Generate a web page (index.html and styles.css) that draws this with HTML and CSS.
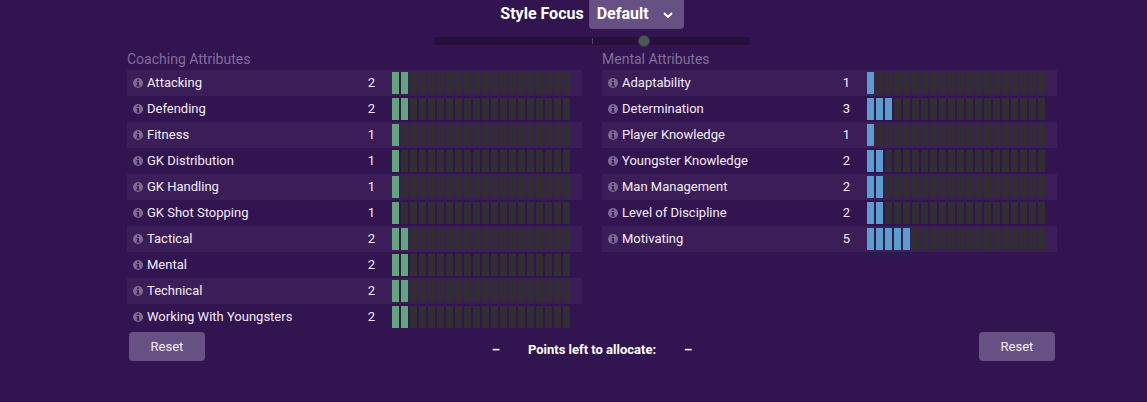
FILE: index.html
```html
<!DOCTYPE html>
<html lang="en">

<head>
    <meta charset="UTF-8">
    <meta name="viewport" content="width=device-width, initial-scale=1.0">
    <title>Coaching Style</title>
    <link rel="stylesheet" href="styles.css">
</head>

<body>
    <svg class="sprite" aria-hidden="true">
        <symbol id="info" viewBox="0 0 10 10">
            <circle cx="5" cy="5" r="5" fill="#7d6a92" />
            <path d="M4 1.5h2v1.5H4zM3.5 4H6v3.5h.7v1H3.4v-1h.8V5h-.7z" fill="#35184f" />
        </symbol>
    </svg>
    <main class="panel">
        <div class="style-focus">
            <label for="focus">Style Focus</label>
            <div class="select-wrap">
                <select id="focus">
                    <option>Default</option>
                </select>
                <svg class="chevron" viewBox="0 0 10 6"><path d="M1 1l4 4 4-4" /></svg>
            </div>
        </div>
        <div class="slider">
            <input type="range" min="0" max="100" value="67" aria-label="Style balance">
        </div>

        <div class="columns">
            <table class="attributes coaching">
                <caption>Coaching Attributes</caption>
                <tbody>
                    <tr><th scope="row"><svg class="info"><use href="#info" /></svg>Attacking</th><td class="value">2</td><td class="meter"><div class="bar"><div class="fill" style="--value: 2"></div></div></td></tr>
                    <tr><th scope="row"><svg class="info"><use href="#info" /></svg>Defending</th><td class="value">2</td><td class="meter"><div class="bar"><div class="fill" style="--value: 2"></div></div></td></tr>
                    <tr><th scope="row"><svg class="info"><use href="#info" /></svg>Fitness</th><td class="value">1</td><td class="meter"><div class="bar"><div class="fill" style="--value: 1"></div></div></td></tr>
                    <tr><th scope="row"><svg class="info"><use href="#info" /></svg>GK Distribution</th><td class="value">1</td><td class="meter"><div class="bar"><div class="fill" style="--value: 1"></div></div></td></tr>
                    <tr><th scope="row"><svg class="info"><use href="#info" /></svg>GK Handling</th><td class="value">1</td><td class="meter"><div class="bar"><div class="fill" style="--value: 1"></div></div></td></tr>
                    <tr><th scope="row"><svg class="info"><use href="#info" /></svg>GK Shot Stopping</th><td class="value">1</td><td class="meter"><div class="bar"><div class="fill" style="--value: 1"></div></div></td></tr>
                    <tr><th scope="row"><svg class="info"><use href="#info" /></svg>Tactical</th><td class="value">2</td><td class="meter"><div class="bar"><div class="fill" style="--value: 2"></div></div></td></tr>
                    <tr><th scope="row"><svg class="info"><use href="#info" /></svg>Mental</th><td class="value">2</td><td class="meter"><div class="bar"><div class="fill" style="--value: 2"></div></div></td></tr>
                    <tr><th scope="row"><svg class="info"><use href="#info" /></svg>Technical</th><td class="value">2</td><td class="meter"><div class="bar"><div class="fill" style="--value: 2"></div></div></td></tr>
                    <tr><th scope="row"><svg class="info"><use href="#info" /></svg>Working With Youngsters</th><td class="value">2</td><td class="meter"><div class="bar"><div class="fill" style="--value: 2"></div></div></td></tr>
                </tbody>
            </table>

            <table class="attributes mental">
                <caption>Mental Attributes</caption>
                <tbody>
                    <tr><th scope="row"><svg class="info"><use href="#info" /></svg>Adaptability</th><td class="value">1</td><td class="meter"><div class="bar"><div class="fill" style="--value: 1"></div></div></td></tr>
                    <tr><th scope="row"><svg class="info"><use href="#info" /></svg>Determination</th><td class="value">3</td><td class="meter"><div class="bar"><div class="fill" style="--value: 3"></div></div></td></tr>
                    <tr><th scope="row"><svg class="info"><use href="#info" /></svg>Player Knowledge</th><td class="value">1</td><td class="meter"><div class="bar"><div class="fill" style="--value: 1"></div></div></td></tr>
                    <tr><th scope="row"><svg class="info"><use href="#info" /></svg>Youngster Knowledge</th><td class="value">2</td><td class="meter"><div class="bar"><div class="fill" style="--value: 2"></div></div></td></tr>
                    <tr><th scope="row"><svg class="info"><use href="#info" /></svg>Man Management</th><td class="value">2</td><td class="meter"><div class="bar"><div class="fill" style="--value: 2"></div></div></td></tr>
                    <tr><th scope="row"><svg class="info"><use href="#info" /></svg>Level of Discipline</th><td class="value">2</td><td class="meter"><div class="bar"><div class="fill" style="--value: 2"></div></div></td></tr>
                    <tr><th scope="row"><svg class="info"><use href="#info" /></svg>Motivating</th><td class="value">5</td><td class="meter"><div class="bar"><div class="fill" style="--value: 5"></div></div></td></tr>
                </tbody>
            </table>
        </div>

        <div class="actions">
            <button type="button">Reset</button>
            <div class="points">
                <span>–</span>
                <span>Points left to allocate:</span>
                <span>–</span>
            </div>
            <button type="button">Reset</button>
        </div>
    </main>
</body>

</html>
```

FILE: styles.css
```css
* {
    box-sizing: border-box;
}

body {
    margin: 0;
    min-height: 100vh;
    border-bottom: 1px solid #2a0f45;
    background: #321450;
    color: #f3ecf8;
    font-family: Roboto, "Liberation Sans", sans-serif;
    font-size: 13px;
    line-height: 20px;
}

.sprite {
    display: none;
}

.panel {
    padding: 0 90px 0 127px;
}

/* STYLE FOCUS */
.style-focus {
    display: flex;
    justify-content: center;
    gap: 5px;
    height: 29px;
    font-size: 16px;
    font-weight: bold;
    line-height: 28px;
    color: #fff;
}

.select-wrap {
    position: relative;
}

.select-wrap select {
    appearance: none;
    width: 95px;
    height: 29px;
    padding: 0 8px 2px;
    border: 0;
    border-radius: 0 0 4px 4px;
    background: #675083;
    color: inherit;
    font: inherit;
}

.chevron {
    position: absolute;
    right: 11px;
    top: 12px;
    width: 10px;
    height: 6px;
    fill: none;
    stroke: #fff;
    stroke-width: 2;
    pointer-events: none;
}

.slider {
    display: flex;
    justify-content: center;
    padding: 6px 0 1px;
}

.slider input {
    appearance: none;
    width: 316px;
    height: 12px;
    margin: 0;
    background: none;
}

.slider input::-webkit-slider-runnable-track {
    height: 8px;
    border-radius: 4px;
    background: linear-gradient(#55416a, #55416a) center / 1px 6px no-repeat #26103a;
}

.slider input::-webkit-slider-thumb {
    appearance: none;
    width: 12px;
    height: 12px;
    margin-top: -2px;
    border: 1px solid #3a3f48;
    border-radius: 50%;
    background: #4c5758;
}

/* ATTRIBUTES */
.columns {
    display: grid;
    grid-template-columns: 1fr 1fr;
    align-items: start;
    gap: 20px;
}

.attributes {
    width: 100%;
    border-collapse: collapse;
}

.attributes caption {
    height: 22px;
    font-size: 14px;
    line-height: 22px;
    text-align: left;
    color: #836c9a;
}

.attributes tr {
    height: 26px;
}

.attributes tr:nth-child(odd) {
    background: #3b1d57;
}

.attributes th,
.attributes td {
    padding: 0;
}

.attributes th {
    padding-left: 6px;
    text-align: left;
    font-weight: normal;
    white-space: nowrap;
}

.info {
    width: 10px;
    height: 10px;
    margin-right: 4px;
    vertical-align: -1px;
}

.value {
    text-align: right;
}

.attributes .meter {
    width: 207px;
    padding: 0 12px 0 17px;
}

.bar {
    width: 178px;
    height: 22px;
    background: repeating-linear-gradient(to right, #302e30 0 7px, transparent 7px 9px);
}

.fill {
    width: calc(var(--value) * 9px - 2px);
    height: 22px;
    background: repeating-linear-gradient(to right, var(--fill) 0 7px, #321a42 7px 9px);
}

.coaching {
    --fill: #62a57f;
}

.mental {
    --fill: #5c9dd1;
}

/* FOOTER */
.actions {
    display: flex;
    justify-content: space-between;
    padding: 2px;
}

.actions button {
    width: 76px;
    height: 29px;
    padding: 0;
    border: 0;
    border-radius: 4px;
    background: #675083;
    color: #f3ecf8;
    font: inherit;
}

.points {
    display: flex;
    gap: 28px;
    padding-top: 8px;
    font-weight: bold;
    color: #fff;
}
```
